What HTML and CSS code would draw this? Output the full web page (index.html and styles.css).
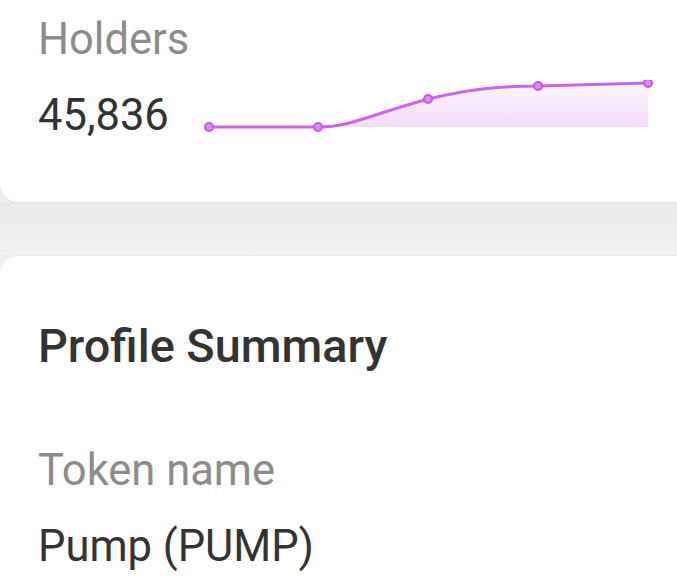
FILE: index.html
```html
<!DOCTYPE html>
<html>
<head>
<meta charset="utf-8">
<link rel="stylesheet" href="styles.css">
</head>
<body>
<div class="page">
  <section class="card card-top">
    <div class="label">Holders</div>
    <div class="stat-row">
      <div class="value">45,836</div>
      <svg class="spark" width="456" height="60" viewBox="0 0 456 60">
        <defs>
          <linearGradient id="fillg" x1="0" y1="0" x2="0" y2="1">
            <stop offset="0" stop-color="#d98cee" stop-opacity="0.08"/>
            <stop offset="1" stop-color="#d98cee" stop-opacity="0.32"/>
          </linearGradient>
        </defs>
        <path d="M9 47 L118 47 C150 47 170 35 228 19 C270 9 300 6 338 6 L448 3 L448 47 Z" fill="url(#fillg)"/>
        <path d="M9 47 L118 47 C150 47 170 35 228 19 C270 9 300 6 338 6 L448 3" fill="none" stroke="#cc66e8" stroke-width="3" stroke-linecap="round"/>
        <g fill="#d98cf0" stroke="#c65ae6" stroke-width="2">
          <circle cx="9" cy="47" r="4"/>
          <circle cx="118" cy="47" r="4"/>
          <circle cx="228" cy="19" r="4"/>
          <circle cx="338" cy="6" r="4"/>
          <circle cx="448" cy="3" r="4"/>
        </g>
      </svg>
    </div>
  </section>
  <div class="gap"></div>
  <section class="card card-bottom">
    <h2 class="title">Profile Summary</h2>
    <div class="field-label">Token name</div>
    <div class="field-value">Pump (PUMP)</div>
  </section>
</div>
</body>
</html>
```

FILE: styles.css
```css
html, body {
  margin: 0;
  padding: 0;
}
body {
  background: #eeeff1;
  font-family: Roboto, "Noto Sans", "Liberation Sans", sans-serif;
  overflow: hidden;
  width: 677px;
  height: 580px;
}
.page {
  display: flex;
  flex-direction: column;
}
.card {
  background: #ffffff;
  padding-left: 38px;
  padding-right: 21px;
}
.card-top {
  padding-top: 14px;
  padding-bottom: 60px;
  border-bottom: 1px solid #e3e5e8;
  border-radius: 0 0 0 18px;
  box-shadow: 0 1px 2px rgba(0, 0, 0, 0.04);
}
.card-bottom {
  padding-top: 63px;
  border-top: 1px solid #e3e5e8;
  border-radius: 18px 0 0 0;
  min-height: 320px;
}
.gap {
  height: 52px;
  background: linear-gradient(to bottom, #eaebed, #f2f2f3);
}
.label {
  font-size: 43.5px;
  line-height: 52px;
  color: #8c8c8c;
}
.stat-row {
  display: flex;
  margin-top: 24px;
  height: 52px;
}
.value {
  font-size: 43.5px;
  line-height: 52px;
  color: #333333;
}
.spark {
  margin-left: auto;
  margin-top: -10px;
  display: block;
}
.title {
  margin: 0;
  font-size: 46.8px;
  line-height: 54px;
  font-weight: 500;
  color: #333333;
}
.field-label {
  margin-top: 73px;
  font-size: 43.5px;
  line-height: 50px;
  color: #8c8c8c;
}
.field-value {
  margin-top: 25px;
  font-size: 43.5px;
  line-height: 52px;
  color: #333333;
}
```
